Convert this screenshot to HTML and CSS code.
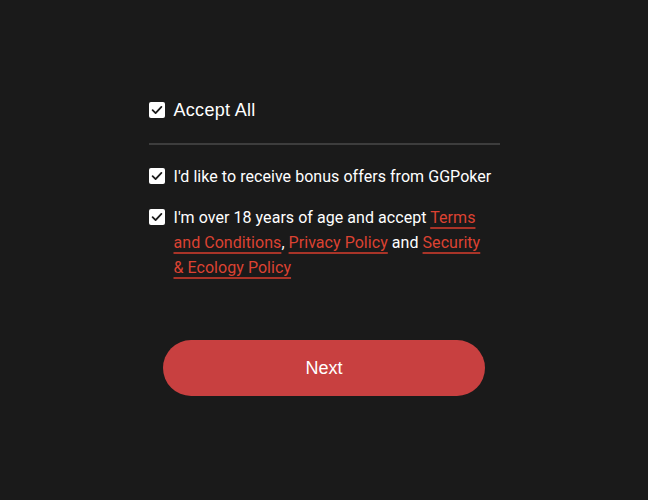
FILE: index.html
```html
<!DOCTYPE html>
<html>
<head>
<meta charset="utf-8">
<link rel="stylesheet" href="styles.css">
</head>
<body>
<main class="page">
  <div class="form">
    <label class="row row-all">
      <span class="box"><svg viewBox="0 0 16 16" width="16" height="16"><rect width="16" height="16" rx="2" fill="#fff"/><path d="M3.6 8.2 L6.6 11.1 L12.4 4.9" fill="none" stroke="#1a1a1a" stroke-width="1.8" stroke-linecap="round" stroke-linejoin="round"/></svg></span>
      <span class="label-all">Accept All</span>
    </label>
    <div class="divider"></div>
    <label class="row">
      <span class="box"><svg viewBox="0 0 16 16" width="16" height="16"><rect width="16" height="16" rx="2" fill="#fff"/><path d="M3.6 8.2 L6.6 11.1 L12.4 4.9" fill="none" stroke="#1a1a1a" stroke-width="1.8" stroke-linecap="round" stroke-linejoin="round"/></svg></span>
      <span class="label">I'd like to receive bonus offers from GGPoker</span>
    </label>
    <label class="row">
      <span class="box"><svg viewBox="0 0 16 16" width="16" height="16"><rect width="16" height="16" rx="2" fill="#fff"/><path d="M3.6 8.2 L6.6 11.1 L12.4 4.9" fill="none" stroke="#1a1a1a" stroke-width="1.8" stroke-linecap="round" stroke-linejoin="round"/></svg></span>
      <span class="label">I'm over 18 years of age and accept <a class="link">Terms and Conditions</a>, <a class="link">Privacy Policy</a> and <a class="link">Security &amp; Ecology Policy</a></span>
    </label>
  </div>
  <button class="next">Next</button>
</main>
</body>
</html>
```
FILE: styles.css
```css
html, body {
  margin: 0;
  padding: 0;
  background: #1a1a1a;
}
.page {
  width: 648px;
  height: 500px;
  display: flex;
  flex-direction: column;
  align-items: center;
  padding-top: 99px;
  box-sizing: border-box;
}
.form {
  width: 351px;
  display: flex;
  flex-direction: column;
}
.row {
  display: flex;
  align-items: flex-start;
  gap: 9px;
  color: #fff;
  font-family: Roboto, "Liberation Sans", sans-serif;
  font-size: 16px;
  line-height: 25px;
}
.box {
  flex: none;
  width: 16px;
  height: 16px;
  margin-top: 4px;
  display: block;
}
.box svg { display: block; }
.row-all {
  align-items: center;
}
.row-all .box { margin-top: 0; }
.label-all {
  font-family: "Liberation Sans", Arial, sans-serif;
  font-size: 18px;
  line-height: 22px;
  letter-spacing: 0.3px;
}
.divider {
  height: 2px;
  background: #3d3d3d;
  margin-top: 22px;
  margin-bottom: 19px;
}
.row + .row { margin-top: 16px; }
.label {
  letter-spacing: 0.05px;
  max-width: 319px;
}
.link {
  color: #dc4232;
  text-decoration: underline;
  text-decoration-thickness: 2px;
  text-underline-offset: 4px;
  text-decoration-color: #a83428;
}
.next {
  margin-top: 60px;
  width: 322px;
  height: 56px;
  border: none;
  border-radius: 28px;
  background: #c84040;
  color: #fff;
  font-family: "Liberation Sans", Arial, sans-serif;
  font-size: 18px;
  padding: 0;
}
```
